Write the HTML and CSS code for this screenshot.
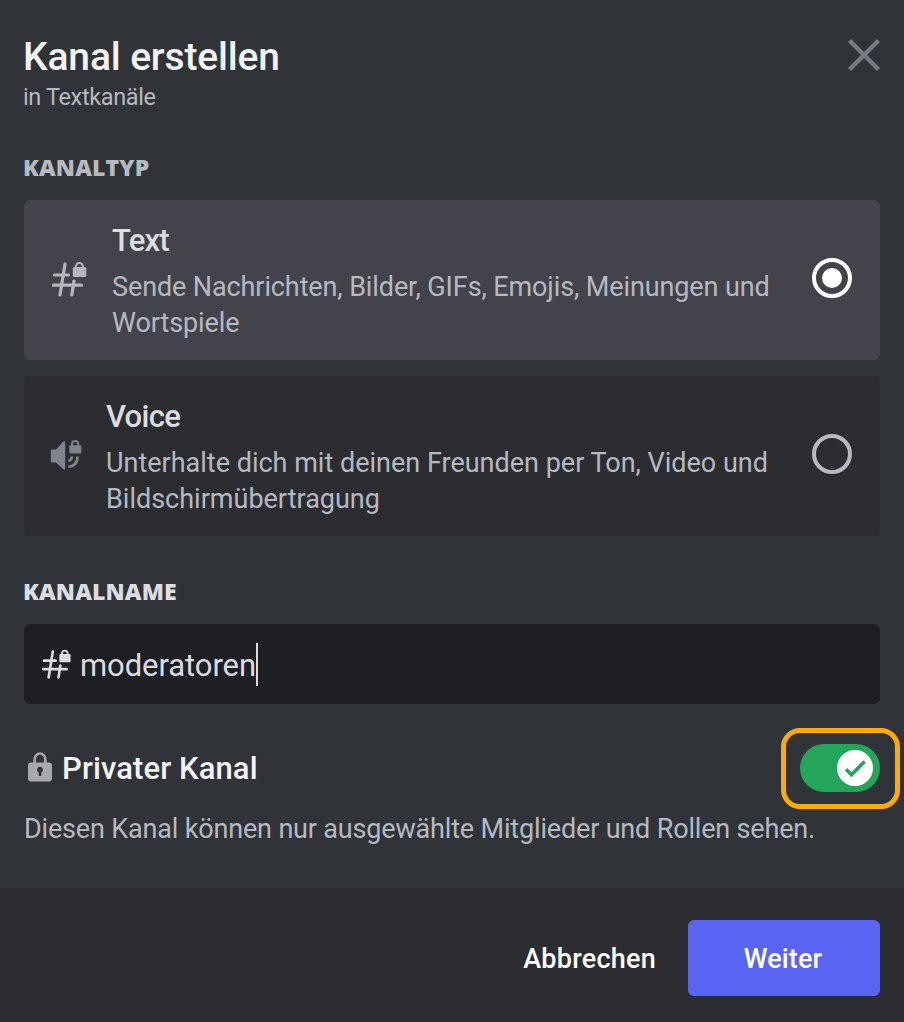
FILE: index.html
```html
<!DOCTYPE html>
<html lang="de">
<head>
<meta charset="utf-8">
<title>Kanal erstellen</title>
<link rel="stylesheet" href="styles.css">
</head>
<body>
<main class="modal">
  <header class="header">
    <div>
      <h1 class="title">Kanal erstellen</h1>
      <p class="subtitle">in Textkanäle</p>
    </div>
    <svg class="close" viewBox="0 0 34 34"><path d="M2.500 2.500L31.500 31.500M31.500 2.500L2.500 31.500"/></svg>
  </header>

  <h2 class="label label-type">KANALTYP</h2>
  <section class="option option-selected">
    <svg class="icon-text" viewBox="0 0 36 36">
      <path class="hash" d="M13 3L8 34M22 20L19.800 34M2.500 14H16.500M1.500 24.200H29.500"/>
      <path class="lock-shackle" d="M24 8V5.300a3.400 3.400 0 0 1 6.800 0V8"/>
      <rect class="lock-body" x="20.800" y="6" width="13.500" height="10" rx="1.500"/>
    </svg>
    <div class="copy">
      <h3 class="name name-text">Text</h3>
      <p class="desc"><span class="d1">Sende Nachrichten, Bilder, GIFs, Emojis, Meinungen und</span><br><span class="d2">Wortspiele</span></p>
    </div>
    <svg class="radio" viewBox="0 0 40 40"><circle class="ring" cx="20" cy="20" r="18"/><circle class="dot" cx="20" cy="20" r="10"/></svg>
  </section>
  <section class="option option-voice">
    <svg class="icon-voice" viewBox="0 0 32 32">
      <path class="speaker" d="M1.500 9.500H6L12.500 2.300Q15.200 0 15.200 2.500V28Q15.200 31 12.500 28.400L6 22.500H1.500Q.800 22.500.800 21.500V10.500Q.800 9.500 1.500 9.500Z"/>
      <path class="wave" d="M18.300 21Q21.800 20.200 21.800 16.500M18.300 26.900Q27.500 26 27.500 16.500"/>
      <path class="lock-shackle" d="M22 7V4.200a3.100 3.100 0 0 1 6.200 0V7"/>
      <rect class="lock-body" x="19.300" y="5.300" width="12" height="8.200" rx="1.300"/>
    </svg>
    <div class="copy">
      <h3 class="name name-voice">Voice</h3>
      <p class="desc"><span>Unterhalte dich mit deinen Freunden per Ton, Video und</span><br><span>Bildschirmübertragung</span></p>
    </div>
    <svg class="radio radio-off" viewBox="0 0 40 40"><circle class="ring" cx="20" cy="20" r="18"/></svg>
  </section>

  <h2 class="label label-name">KANALNAME</h2>
  <div class="field">
    <svg class="icon-field" viewBox="0 0 36 36">
      <path class="hash" d="M13 3L8 34M22 20L19.800 34M2.500 14H16.500M1.500 24.200H29.500"/>
      <path class="lock-shackle" d="M24 8V5.300a3.400 3.400 0 0 1 6.800 0V8"/>
      <rect class="lock-body" x="20.800" y="6" width="13.500" height="10" rx="1.500"/>
    </svg>
    <span class="value">moderatoren</span><i class="caret"></i>
  </div>

  <div class="private">
    <svg class="icon-lock" viewBox="0 0 24 30">
      <path class="big-shackle" d="M6.700 12V7.500a5.300 6 0 0 1 10.600 0V12"/>
      <path class="big-body" fill-rule="evenodd" d="M3 10.500H21Q24 10.500 24 13.500V26.500Q24 29.500 21 29.500H3Q0 29.500 0 26.500V13.500Q0 10.500 3 10.500ZM12 14.800A3 3 0 0 0 10.700 20.500V24H13.300V20.500A3 3 0 0 0 12 14.800Z"/>
    </svg>
    <span class="private-title">Privater Kanal</span>
    <div class="highlight">
      <div class="switch"><svg class="knob" viewBox="0 0 36 36"><circle cx="18" cy="18" r="18"/><path d="M9 19.200L14.500 24.800L27.600 11.500"/></svg></div>
    </div>
  </div>
  <p class="hint">Diesen Kanal können nur ausgewählte Mitglieder und Rollen sehen.</p>

  <footer class="footer">
    <span class="cancel">Abbrechen</span>
    <button class="next">Weiter</button>
  </footer>
</main>
</body>
</html>
```
FILE: styles.css
```css
* { box-sizing: border-box; }
body, h1, h2, h3, p { margin: 0; }
body { background: #303338; font-family: Roboto, "Noto Sans", sans-serif; color: #f2f3f5; }
svg { display: block; flex: none; }
.modal { width: 904px; height: 1022px; display: flex; flex-direction: column; overflow: hidden; white-space: nowrap; }

.header { height: 152px; padding: 33px 23px 0 24px; display: flex; justify-content: space-between; }
.title { font-size: 39px; line-height: 48px; font-weight: 500; letter-spacing: -0.150px; margin-left: -1px; }
.subtitle { font-size: 23.500px; line-height: 32px; color: #b5bac1; letter-spacing: -0.360px; margin-left: -1px; }
.close { width: 34px; height: 34px; margin-top: 5px; }
.close path { stroke: #777a80; stroke-width: 4.500; }

.label { margin: 0 23px; height: 48px; line-height: 30px; font-family: "Open Sans", sans-serif; font-size: 23px; font-weight: 800; letter-spacing: 0.150px; }
.label-type { color: #b5bac1; }
.label-name { color: #dbdee1; margin-top: 40px; }

.option { margin: 0 24px; height: 160px; border-radius: 6px; display: flex; padding-right: 28px; }
.option-selected { background: #43444b; padding-left: 28px; }
.option-voice { background: #2b2d31; margin-top: 16px; padding-left: 26px; }
.copy { flex: 1; min-width: 0; padding-top: 22px; }
.icon-text { width: 36px; height: 36px; margin: 61px 24px 0 0; color: #b5b7bc; }
.icon-voice { width: 32px; height: 32px; margin: 64px 24px 0 0; color: #80848e; }
.hash { fill: none; stroke: currentColor; stroke-width: 3.200; stroke-linecap: round; }
.wave { fill: none; stroke: currentColor; stroke-width: 2.800; }
.lock-shackle { fill: none; stroke: currentColor; stroke-width: 2; }
.lock-body, .speaker { fill: currentColor; }
.name { font-size: 31px; line-height: 38px; font-weight: 500; color: #dbdee1; }
.name-text { letter-spacing: -0.800px; }
.name-voice { letter-spacing: -0.700px; }
.desc { font-size: 27px; line-height: 36px; color: #b5bac1; padding-top: 9px; }
.d1 { letter-spacing: -0.110px; }
.d2 { letter-spacing: -0.100px; }
.radio { width: 40px; height: 40px; margin-top: 58px; color: #fff; }
.radio-off { color: #b5bac1; }
.ring { fill: none; stroke: currentColor; stroke-width: 4; }
.dot { fill: currentColor; }

.field { margin: 0 24px; height: 80px; background: #1e1f22; border-radius: 6px; display: flex; align-items: center; padding-left: 18px; color: #dbdee1; }
.icon-field { width: 30px; height: 30px; margin-right: 8px; }
.value { font-size: 31px; line-height: 44px; padding-top: 4px; letter-spacing: -0.080px; }
.caret { width: 2px; height: 43px; background: #dbdee1; }

.private { height: 81px; margin: 24px 4px 0 28px; display: flex; align-items: center; }
.icon-lock { width: 24px; height: 30px; margin-bottom: 3px; color: #a9aaae; }
.big-shackle { fill: none; stroke: currentColor; stroke-width: 2.600; }
.big-body { fill: currentColor; }
.private-title { font-size: 31px; line-height: 40px; font-weight: 500; letter-spacing: 0.100px; margin: 1px 0 0 10px; flex: 1; }
.highlight { width: 119px; height: 81px; border: 5px solid #ffab00; border-radius: 19px; padding: 11px 0 0 14px; }
.switch { width: 80px; height: 48px; border-radius: 24px; background: #23a55a; padding: 6px 0 0 37px; }
.knob { width: 36px; height: 36px; }
.knob circle { fill: #fff; }
.knob path { fill: none; stroke: #23a55a; stroke-width: 3.600; }
.hint { margin: 0 24px; height: 79px; padding-top: 2px; font-size: 27px; line-height: 36px; letter-spacing: -0.170px; color: #b5bac1; }

.footer { height: 134px; background: #2b2d31; display: flex; justify-content: flex-end; padding: 32px 24px 0 0; }
.cancel { font-size: 27px; line-height: 78px; font-weight: 500; letter-spacing: 0.250px; color: #fff; margin-right: 32px; }
.next { width: 192px; height: 76px; border: 0; padding: 2px 2px 0 0; border-radius: 6px; background: #5865f2; color: #fff; font: 500 27px/74px Roboto, "Noto Sans", sans-serif; letter-spacing: 0.150px; }
```
